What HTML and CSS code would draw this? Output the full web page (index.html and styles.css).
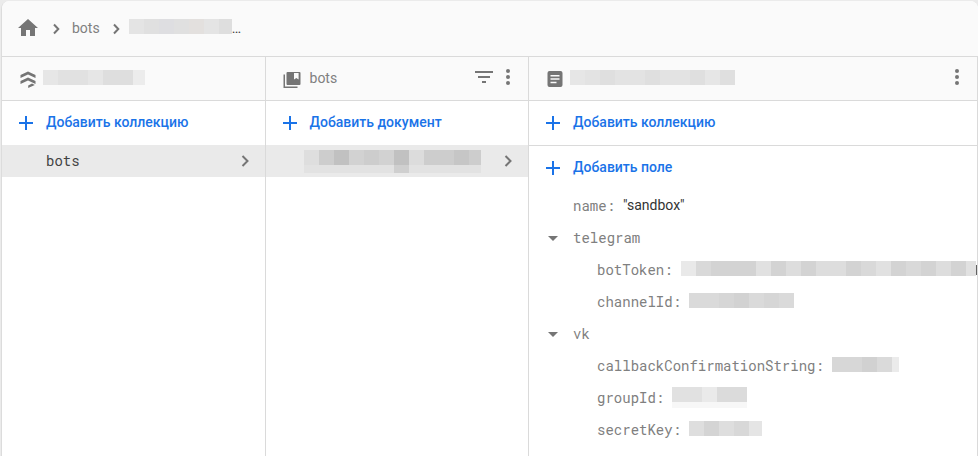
FILE: index.html
```html
<!DOCTYPE html>
<html lang="ru">
<head>
<meta charset="utf-8">
<meta name="viewport" content="width=device-width, initial-scale=1">
<title>bots</title>
<link rel="stylesheet" href="styles.css">
</head>
<body>
<main class="card">
  <nav class="path">
    <a class="home" href="#" aria-label="Home"><svg class="icon" width="24" height="24" viewBox="0 0 24 24"><path d="M10 20v-6h4v6h5v-8h3L12 3 2 12h3v8z"/></svg></a>
    <svg class="chevron" width="8" height="12" viewBox="0 0 8 12"><path d="M2 1.500 6.300 6 2 10.500"/></svg>
    <a class="crumb" href="#">bots</a>
    <svg class="chevron" width="8" height="12" viewBox="0 0 8 12"><path d="M2 1.500 6.300 6 2 10.500"/></svg>
    <a class="crumb current" href="#"><svg class="mosaic" width="103" height="15" shape-rendering="crispEdges"><path fill="#e4e4e4" d="M0 0h103v15H0z"/><path fill="#e0e0e0" d="M15 0h15v15H15zM45 0h15v15H45z"/><path fill="#dedee1" d="M30 0h15v15H30z"/><path fill="#e3e0de" d="M60 0h15v15H60z"/><path fill="#dedede" d="M90 0h13v15H90z"/></svg>…</a>
  </nav>
  <div class="panels">
    <section class="panel">
      <header class="panel-head">
        <svg class="icon" width="24" height="24" viewBox="0 0 24 24"><path d="M12 4.500 4.500 8v3L12 7.500l7.500 3.500V8zM12 10.500 4.500 14v3l7.500-3.500 7.500 3.500v-3zM12.200 18.500l3.800-2 2.800 1.400-6.600 3.100z"/></svg>
        <svg class="mosaic" width="102" height="15" shape-rendering="crispEdges"><path fill="#e6e6e6" d="M0 0h102v15H0z"/><path fill="#e1e1e1" d="M15 0h30v15H15z"/><path fill="#dedede" d="M60 0h30v15H60z"/><path fill="#ececec" d="M90 0h12v15H90z"/></svg>
      </header>
      <button class="add" type="button"><svg class="icon" width="24" height="24" viewBox="0 0 24 24"><path d="M19 13h-6v6h-2v-6H5v-2h6V5h2v6h6z"/></svg><span class="label">Добавить коллекцию</span></button>
      <a class="item" href="#"><span class="mono">bots</span><svg class="chevron" width="8" height="12" viewBox="0 0 8 12"><path d="M1.500 1 6.500 6l-5 5"/></svg></a>
    </section>
    <section class="panel">
      <header class="panel-head">
        <svg class="icon" width="24" height="24" viewBox="0 0 24 24"><path d="M3.500 7.500H5v12h12.500V21h-14zM7.500 5h12a1 1 0 0 1 1 1v11a1 1 0 0 1-1 1h-12a1 1 0 0 1-1-1V6a1 1 0 0 1 1-1zm6.500 1v6.500l2.300-1.500 2.300 1.500V6z"/></svg>
        <h2 class="title">bots</h2>
        <div class="actions">
          <button class="tool" type="button" aria-label="Filter"><svg class="icon" width="24" height="24" viewBox="0 0 24 24"><path d="M10 18h4v-2h-4zM3 6v2h18V6zm3 7h12v-2H6z"/></svg></button>
          <button class="tool" type="button" aria-label="Menu"><svg class="icon" width="24" height="24" viewBox="0 0 24 24"><circle cx="12" cy="6" r="2"/><circle cx="12" cy="12" r="2"/><circle cx="12" cy="18" r="2"/></svg></button>
        </div>
      </header>
      <button class="add" type="button"><svg class="icon" width="24" height="24" viewBox="0 0 24 24"><path d="M19 13h-6v6h-2v-6H5v-2h6V5h2v6h6z"/></svg><span class="label">Добавить документ</span></button>
      <a class="item document" href="#" aria-label="Document"><svg class="mosaic" width="177" height="23" shape-rendering="crispEdges"><path fill="#e2e2e2" d="M0 0h177v23H0z"/><path fill="#dedede" d="M0 0h15v15H0z"/><path fill="#cdcdcd" d="M15 0h162v15H15z"/><path fill="#c1c1c1" d="M30 0h15v15H30zM90 0h15v15H90z"/><path fill="#d2d2d2" d="M45 0h15v15H45zM75 0h15v15H75z"/><path fill="#dcdcdc" d="M105 0h15v15h-15z"/><path fill="#c6c6c6" d="M150 0h15v15h-15z"/><path fill="#cfcfcf" d="M90 15h15v8H90z"/></svg><svg class="chevron" width="8" height="12" viewBox="0 0 8 12"><path d="M1.500 1 6.500 6l-5 5"/></svg></a>
    </section>
    <section class="panel">
      <header class="panel-head">
        <svg class="icon" width="24" height="24" viewBox="0 0 24 24"><path fill-rule="evenodd" d="M6.500 4h11a2 2 0 0 1 2 2v12a2 2 0 0 1-2 2h-11a2 2 0 0 1-2-2V6a2 2 0 0 1 2-2zM7.500 8v1.500h9V8zm0 3.300v1.500h9v-1.500zm0 3.400v1.500h6v-1.500z"/></svg>
        <svg class="mosaic" width="165" height="15" shape-rendering="crispEdges"><path fill="#e3e3e3" d="M0 0h165v15H0z"/><path fill="#dfdfdf" d="M30 0h15v15H30zM75 0h15v15H75zM120 0h15v15h-15zM150 0h15v15h-15z"/><path fill="#e6e6e6" d="M0 0h15v15H0zM135 0h15v15h-15z"/></svg>
        <div class="actions">
          <button class="tool" type="button" aria-label="Menu"><svg class="icon" width="24" height="24" viewBox="0 0 24 24"><circle cx="12" cy="6" r="2"/><circle cx="12" cy="12" r="2"/><circle cx="12" cy="18" r="2"/></svg></button>
        </div>
      </header>
      <button class="add divided" type="button"><svg class="icon" width="24" height="24" viewBox="0 0 24 24"><path d="M19 13h-6v6h-2v-6H5v-2h6V5h2v6h6z"/></svg><span class="label">Добавить коллекцию</span></button>
      <button class="add" type="button"><svg class="icon" width="24" height="24" viewBox="0 0 24 24"><path d="M19 13h-6v6h-2v-6H5v-2h6V5h2v6h6z"/></svg><span class="label">Добавить поле</span></button>
      <ul class="fields">
        <li class="field"><span class="key">name:</span><span class="value">"sandbox"</span></li>
        <li>
          <button class="field group" type="button" aria-expanded="true"><svg class="icon" width="24" height="24" viewBox="0 0 24 24"><path d="m7 10 5 5 5-5z"/></svg><span class="key">telegram</span></button>
          <ul class="fields nested">
            <li class="field"><span class="key">botToken:</span><svg class="mosaic" width="295" height="15" shape-rendering="crispEdges"><path fill="#d9d9d9" d="M0 0h295v15H0z"/><path fill="#e9e9e9" d="M0 0h15v15H0z"/><path fill="#d3d3d3" d="M30 0h45v15H30zM90 0h15v15H90zM120 0h15v15h-15zM165 0h15v15h-15zM210 0h15v15h-15zM240 0h15v15h-15zM270 0h15v15h-15z"/><path fill="#e1e1e1" d="M75 0h15v15H75zM195 0h15v15h-15zM285 0h10v15h-10z"/><path fill="#dddddd" d="M105 0h15v15h-15zM135 0h30v15h-30zM255 0h15v15h-15z"/></svg><span class="clip"></span></li>
            <li class="field"><span class="key">channelId:</span><svg class="mosaic" width="105" height="15" shape-rendering="crispEdges"><path fill="#dadada" d="M0 0h105v15H0z"/><path fill="#d6d6d6" d="M30 0h30v15H30zM75 0h15v15H75z"/><path fill="#d2d2d2" d="M45 0h15v15H45z"/></svg></li>
          </ul>
        </li>
        <li>
          <button class="field group" type="button" aria-expanded="true"><svg class="icon" width="24" height="24" viewBox="0 0 24 24"><path d="m7 10 5 5 5-5z"/></svg><span class="key">vk</span></button>
          <ul class="fields nested">
            <li class="field"><span class="key">callbackConfirmationString:</span><svg class="mosaic" width="67" height="15" shape-rendering="crispEdges"><path fill="#d7d7d7" d="M0 0h67v15H0z"/><path fill="#d1d1d1" d="M30 0h15v15H30z"/><path fill="#dadada" d="M45 0h15v15H45z"/><path fill="#ebebeb" d="M60 0h7v15h-7z"/></svg></li>
            <li class="field"><span class="key">groupId:</span><svg class="mosaic tall" width="75" height="21" shape-rendering="crispEdges"><path fill="#f7f7f7" d="M0 0h75v21H0z"/><path fill="#e1e1e1" d="M0 0h30v15H0z"/><path fill="#eaeaea" d="M30 0h15v15H30z"/><path fill="#dbdbdb" d="M45 0h30v15H45z"/></svg></li>
            <li class="field"><span class="key">secretKey:</span><svg class="mosaic" width="73" height="15" shape-rendering="crispEdges"><path fill="#dedede" d="M0 0h73v15H0z"/><path fill="#d4d4d4" d="M15 0h15v15H15z"/><path fill="#d8d8d8" d="M45 0h15v15H45z"/><path fill="#e5e5e5" d="M60 0h13v15H60z"/></svg></li>
          </ul>
        </li>
      </ul>
    </section>
  </div>
</main>
</body>
</html>
```
FILE: styles.css
```css
* {
  box-sizing: border-box;
}

body {
  margin: 0;
  padding: 1px 0 0 1px;
  min-height: 100vh;
  display: flex;
  background: #ebebeb;
  color: #757575;
  font: 14px/20px Roboto, sans-serif;
}

button {
  border: 0;
  padding: 0;
  background: none;
  color: inherit;
  font: inherit;
  cursor: pointer;
}

a {
  color: inherit;
  text-decoration: none;
}

svg {
  display: block;
  flex: none;
}

.icon {
  fill: currentColor;
}

.chevron {
  fill: none;
  stroke: #757575;
  stroke-width: 2;
}

.mosaic {
  margin-bottom: 3px;
}

.mosaic.tall {
  margin-bottom: 2px;
}

.card {
  flex: 1;
  min-width: 0;
  display: flex;
  flex-direction: column;
  overflow: hidden;
  background: #fff;
  border-left: 1px solid #dcdcdc;
  border-radius: 8px 8px 0 0;
}

.path {
  display: flex;
  align-items: center;
  gap: 12px;
  height: 56px;
  padding: 0 14px;
  background: #fafafa;
  border-bottom: 1px solid #dadada;
}

.home {
  margin-bottom: 2px;
}

.crumb {
  padding-bottom: 2px;
  color: #808080;
}

.crumb.current {
  display: flex;
  align-items: center;
  margin-left: -3px;
  color: #424242;
}

.panels {
  flex: 1;
  display: grid;
  grid-template-columns: 27fr 27fr 46fr;
}

.panel {
  min-width: 0;
  overflow: hidden;
  border-right: 1px solid #dadada;
}

.panel-head {
  display: flex;
  align-items: center;
  gap: 3px;
  height: 44px;
  padding: 0 8px 0 14px;
  background: #fafafa;
  border-bottom: 1px solid #dadada;
}

.title {
  margin: 0;
  padding: 0 0 2px 3px;
  color: #808080;
  font-size: 14px;
  font-weight: 400;
}

.actions {
  display: flex;
  margin-left: auto;
  margin-bottom: 3px;
}

.add {
  display: flex;
  align-items: center;
  gap: 8px;
  width: 100%;
  height: 44px;
  padding: 0 12px;
  color: #1a73e8;
  font-weight: 500;
}

.label {
  padding-bottom: 2px;
}

.add.divided {
  height: 45px;
  border-bottom: 1px solid #dadada;
}

.item {
  display: flex;
  align-items: center;
  justify-content: space-between;
  height: 32px;
  padding: 0 16px 0 44px;
  background: #eaeaea;
  color: #424242;
}

.item.document {
  padding-left: 38px;
}

.item .mosaic {
  margin: 0;
}

.mono,
.key {
  font-family: "Roboto Mono", "Liberation Mono", monospace;
}

.key {
  color: #808080;
}

.fields {
  margin: 0;
  padding: 0;
  list-style: none;
}

.field {
  display: flex;
  align-items: center;
  gap: 8px;
  height: 32px;
  padding-left: 44px;
}

.group {
  width: 100%;
  padding-left: 12px;
}

.nested .field {
  padding-left: 68px;
}

.value {
  padding-bottom: 2px;
  color: #333;
}

.clip {
  flex: none;
  width: 4px;
  height: 10px;
  margin-left: -8px;
  background: #616161;
}
```
